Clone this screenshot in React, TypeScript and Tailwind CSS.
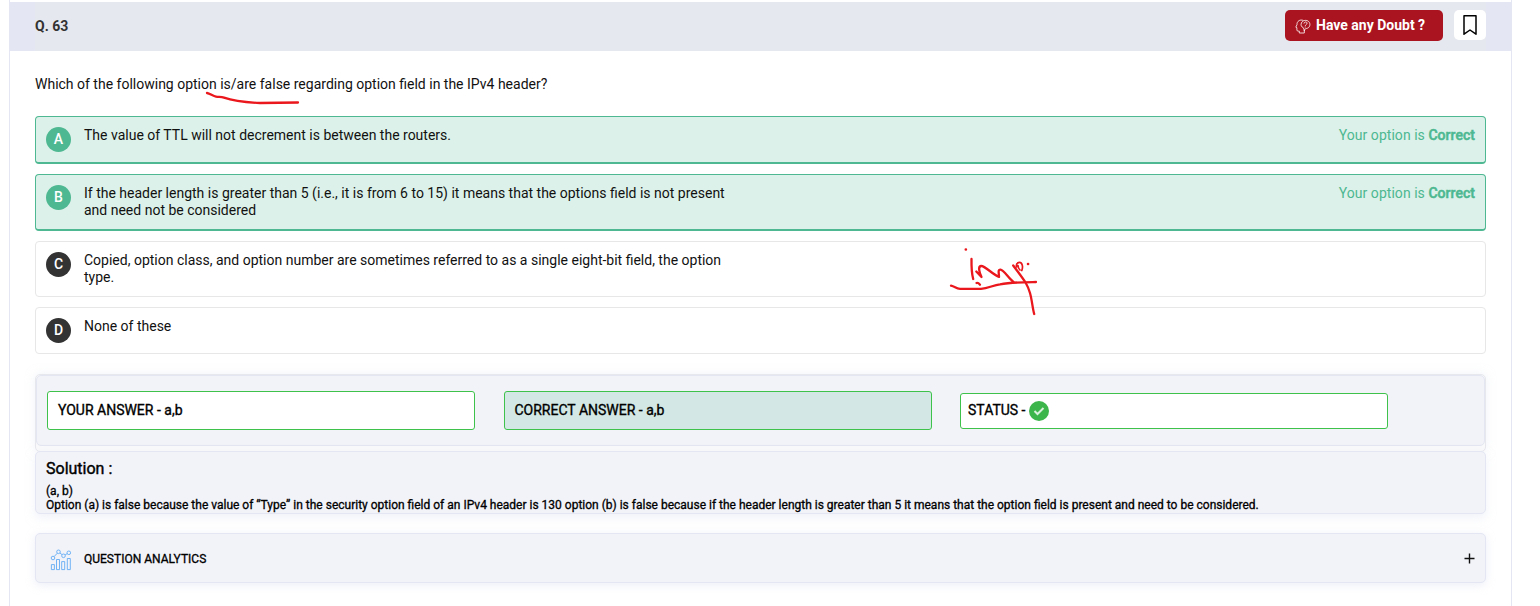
import type { ReactNode } from "react";

type OptionProps = { letter: string; correct?: boolean; box: string; children: ReactNode };

function Option({ letter, correct, box, children }: OptionProps) {
  const tone = correct
    ? "border border-b-2 border-[#4db891] bg-[#dcf1e9]"
    : "border border-[#e7e7e7] bg-white";
  return (
    <div className={`flex items-start rounded-[4px] pl-[10px] pr-[10px] ${tone} ${box}`}>
      <span
        className={`mt-[10px] flex h-[25px] w-[25px] shrink-0 items-center justify-center rounded-full text-[14px] font-medium text-white ${correct ? "bg-[#4db891]" : "bg-[#333333]"}`}
      >
        {letter}
      </span>
      <p className="ml-[13px] mt-[10px] whitespace-nowrap text-[14px] leading-[17px] text-[#111]">{children}</p>
      {correct && (
        <p className="ml-auto mt-[10px] whitespace-nowrap text-[14px] leading-[17px] tracking-[0.04px] text-[#4db891]">
          Your option is <span className="font-medium [-webkit-text-stroke:0.5px_#4db891]">Correct</span>
        </p>
      )}
    </div>
  );
}

function DoubtIcon() {
  return (
    <svg className="ml-[10px] mt-px h-[15px] w-[16px]" viewBox="0 0 16 15" fill="none" stroke="#fff" strokeWidth="0.8" strokeLinecap="round" strokeLinejoin="round">
      <path d="M8 1.3C5 .1 1.8 2.2 2 5.600L.8 8.200l1.100.5v2.400c0 .7.6 1 1.300 1h1.100v1.900h5v-2.700" />
      <path d="M9.300 11.400 8.500 8.900C6.100 7.900 5.600 5.900 6.400 4 7.600 1 11.800.6 13.700 2.600c2 2 1.400 5.400-1 6.500-.8.4-1.500.4-2 .4l-1.400 1.900Z" />
      <path d="M9 4.200c.2-1.900 3.300-1.700 3 .2-.2 1.100-1.700 1.200-1.700 2.300M10.200 8v.1" />
    </svg>
  );
}

function AnalyticsIcon() {
  return (
    <svg className="h-[22px] w-[22px]" viewBox="0 0 22 22" fill="none" stroke="#62acf4" strokeWidth="0.9">
      <circle cx="3" cy="9" r="1.8" />
      <circle cx="8.500" cy="2.800" r="1.800" />
      <circle cx="13.500" cy="6.800" r="1.800" />
      <circle cx="18.800" cy="3.800" r="1.800" />
      <path d="m4.200 7.500 3.100-3.300M10 4l2.100 1.700M15.100 5.900l2.100-1.200" />
      <path d="M1.400 20.600v-5h3v5ZM6.500 20.600V10.500h3v10.100ZM11.700 20.600v-8h3v8ZM17.300 20.600V9.500h3v11.100Z" />
    </svg>
  );
}

function Annotations() {
  return (
    <svg className="pointer-events-none absolute left-0 top-0 h-[606px] w-[1540px]" viewBox="0 0 1540 606" fill="none" stroke="#ea171c" strokeWidth="2.300" strokeLinecap="round" strokeLinejoin="round">
      <path d="M207 93 C210 93.500 213 96.200 216 96.700 C219 97.200 221 96.600 224 97.700 C235 101.600 248 102.500 260 103 L298 102.500" />
      <path d="M965.800 249.500h.1M1028 264h.1" strokeWidth="2.600" />
      <path d="M971.500 259 C971.400 266 971.500 273 973.200 279" />
      <path d="M976.300 271.500 L981.500 277 C979.500 273 977.600 266.500 981 266 C985 265.500 993 275 999 276.800 C999 273 997.500 269.500 1000.500 269.700 C1004 270 1009 279 1013.500 282" />
      <path d="M976.500 283 C978 282.500 979 283.500 980 284.700" />
      <path d="M1013.200 265.500 C1024 280 1027 283 1030 293 C1032 300 1032.500 308 1034.200 314" />
      <path d="M1016.500 267 C1015.500 262 1021 261 1022.200 265 C1023 267.500 1021.800 270.500 1021.800 270.500 M1018 265.500 C1018 268 1019 269 1020 270" strokeWidth="1.700" />
      <path d="M951 285.700 C955 286.500 956 288.700 960 288.800 L981 288.800 C988 288.500 993 285.200 1000 284.300 C1012 282.200 1024 282.200 1036 282" />
    </svg>
  );
}

const answerText = "text-[14px] font-normal leading-[17px] text-black [-webkit-text-stroke:0.35px_#000]";

export default function App() {
  return (
    <div className="relative h-[606px] w-[1540px] overflow-hidden bg-white pl-[9px] font-[Roboto,sans-serif]">
      <main className="h-[606px] w-[1503px] border-x border-[#e4e7f3] pt-[2px]">
        <header className="h-[49px] bg-[#e4e7f3] px-[25px]">
          <div className="flex h-full items-start bg-[#e5e8ee]">
            <h1 className="mt-[16px] text-[14px] font-bold leading-[17px] text-[#333]">Q. 63</h1>
            <button className="ml-auto mt-[8px] flex h-[31px] w-[158px] items-center rounded-[5px] bg-[#aa1420] text-left">
              <DoubtIcon />
              <span className="ml-[5px] whitespace-nowrap text-[14px] font-bold leading-[17px] text-white">Have any Doubt ?</span>
            </button>
            <button className="ml-[11px] mt-[8px] flex h-[30px] w-[32px] items-center justify-center rounded-[5px] bg-white">
              <svg className="h-[20px] w-[14px]" viewBox="0 0 14 20" fill="none" stroke="#000" strokeWidth="1.5" strokeLinejoin="round">
                <path d="M1 .8h12v18.400l-6-4.200-6 4.200Z" />
              </svg>
            </button>
          </div>
        </header>

        <div className="px-[25px] pt-[25px]">
          <p className="h-[40px] whitespace-nowrap text-[14px] leading-[17px] text-[#111]">
            Which of the following option is/are false regarding option field in the IPv4 header?
          </p>

          <div className="flex flex-col gap-[10px]">
            <Option letter="A" correct box="h-[48px]">The value of TTL will not decrement is between the routers.</Option>
            <Option letter="B" correct box="h-[57px]">
              If the header length is greater than 5 (i.e., it is from 6 to 15) it means that the options field is not present
              <br />
              and need not be considered
            </Option>
            <Option letter="C" box="h-[56px]">
              Copied, option class, and option number are sometimes referred to as a single eight-bit field, the option
              <br />
              type.
            </Option>
            <Option letter="D" box="h-[47px]">None of these</Option>
          </div>

          <section className="mt-[20px] h-[78px] rounded-[5px] border border-[#e7e8ee] bg-[#f9f9fb] shadow-[0_0_10px_rgba(228,231,243,0.5)]">
            <div className="flex h-[71px] items-start gap-[29px] rounded-[5px] border border-[#e4e7f1] bg-[#f2f3f9] pl-[10px]">
              <div className={`mt-[15px] flex h-[39px] w-[428px] items-center rounded-[3px] border border-[#3fc24c] bg-white pl-[10px] ${answerText}`}>
                YOUR ANSWER - a,b
              </div>
              <div className={`mt-[15px] flex h-[39px] w-[428px] items-center rounded-[3px] border border-[#3fc24c] bg-[#d3e8e5] pl-[9.5px] ${answerText}`}>
                CORRECT ANSWER - a,b
              </div>
              <div className={`-ml-px mt-[17px] flex h-[36px] w-[428px] items-center rounded-[3px] border border-[#3fc24c] bg-white pb-px pl-[7px] ${answerText}`}>
                STATUS -
                <svg className="ml-[4px] mt-px h-[20px] w-[20px]" viewBox="0 0 20 20">
                  <circle cx="10" cy="10" r="10" fill="#3cb54a" />
                  <path d="m5.500 10 3 3 6-6" fill="none" stroke="#d8f0dc" strokeWidth="2" />
                </svg>
              </div>
            </div>
          </section>

          <section className="-mt-px h-[63px] rounded-[5px] border border-[#e4e7f3] bg-[#f2f3f9] pl-[10px] text-black shadow-[0_4px_10px_rgba(228,231,243,0.5)]">
            <h2 className="pt-[7px] text-[16px] font-normal leading-[20px] [-webkit-text-stroke:0.4px_#000]">Solution :</h2>
            <div className="mt-[5px] whitespace-nowrap text-[12px] font-normal leading-[14px] [-webkit-text-stroke:0.3px_#000]">
              <p>(a, b)</p>
              <p>
                Option (a) is false because the value of “Type” in the security option field of an IPv4 header is 130 option (b) is false because if the header length is greater than 5 it means that the option field is present and need to be considered.
              </p>
            </div>
          </section>

          <section className="mt-[19px] flex h-[50px] items-center rounded-[5px] border border-[#e4e7f3] bg-[#f2f3f9] pl-[14px] pr-[10px] shadow-[0_2px_10px_rgba(228,231,243,0.7)]">
            <div className="mt-[4px]"><AnalyticsIcon /></div>
            <span className="ml-[12px] mt-px text-[12px] font-normal leading-[16px] text-black [-webkit-text-stroke:0.3px_#000]">QUESTION ANALYTICS</span>
            <svg className="ml-auto h-[11px] w-[11px]" viewBox="0 0 11 11" stroke="#111" strokeWidth="1.400">
              <path d="M5.500 .5v10M.5 5.500h10" />
            </svg>
          </section>
        </div>
      </main>
      <Annotations />
    </div>
  );
}
